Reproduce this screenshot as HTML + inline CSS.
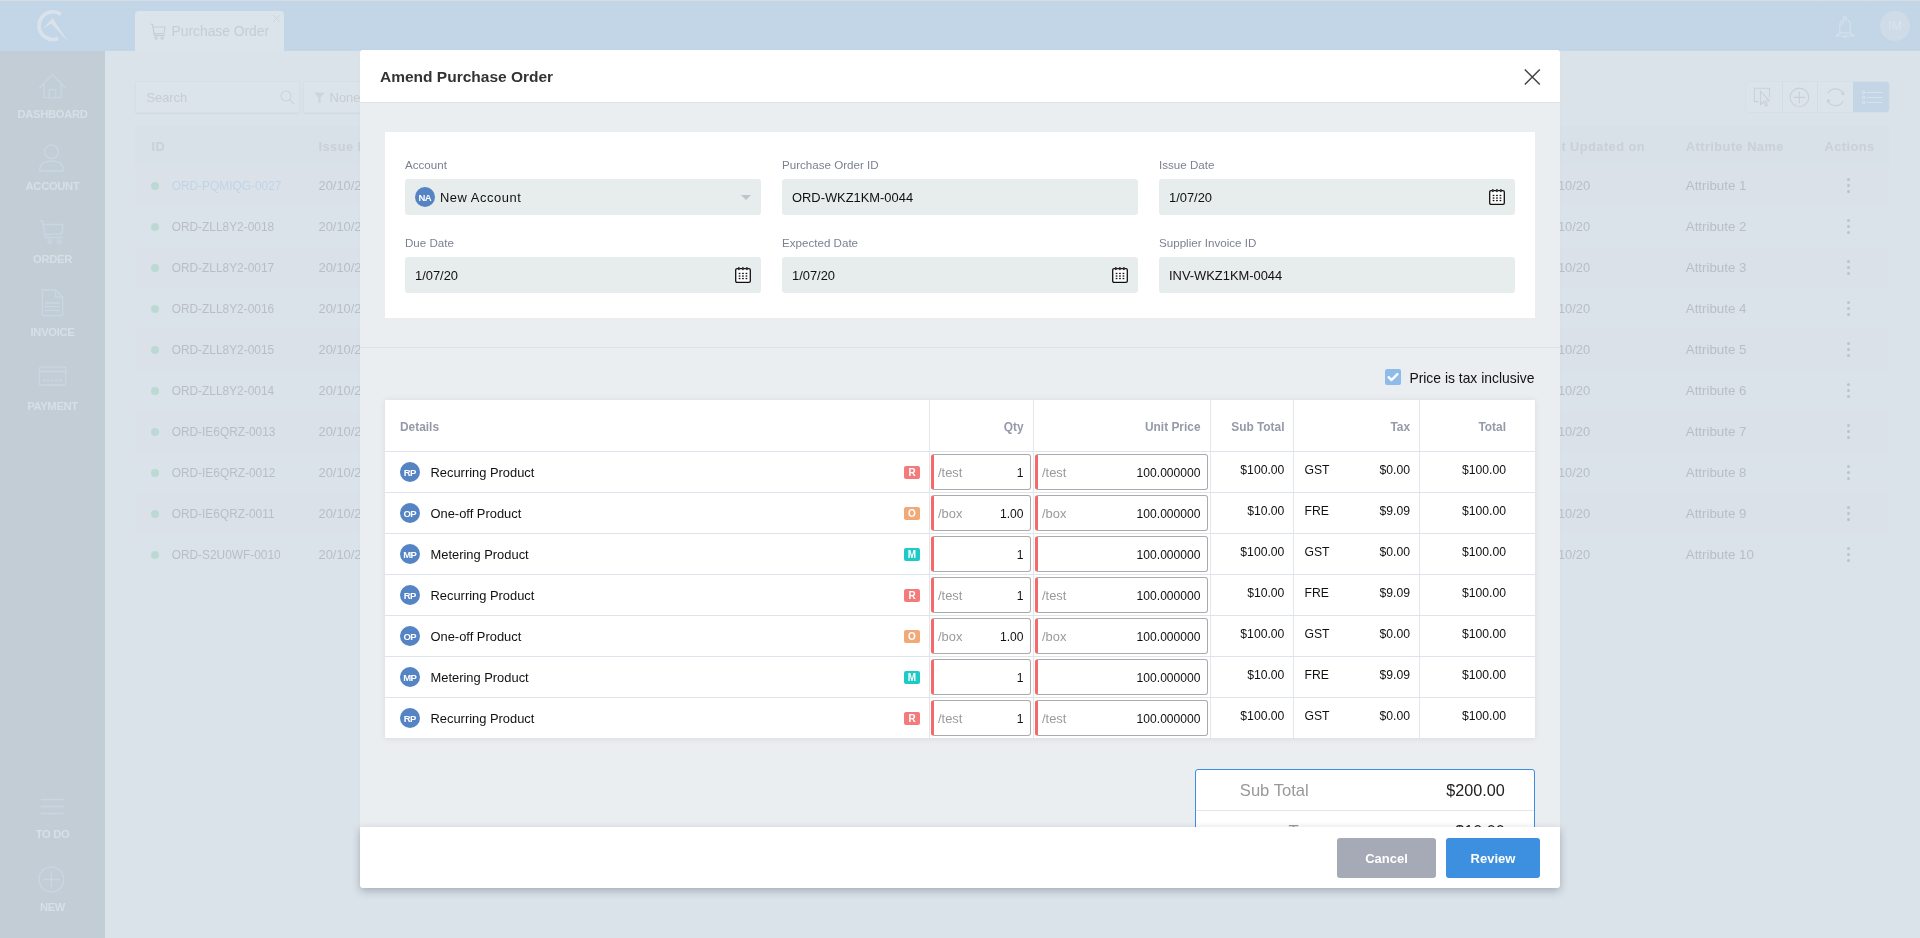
<!DOCTYPE html>
<html><head><meta charset="utf-8">
<style>
*{box-sizing:border-box;margin:0;padding:0}
html,body{width:1920px;height:938px;overflow:hidden}
body{position:relative;background:#dbe3ea;font-family:"Liberation Sans",sans-serif;color:#111}
#root{position:absolute;left:0;top:0;width:1920px;height:938px;will-change:transform;overflow:hidden}
.abs{position:absolute}
/* background app */
#topline{left:0;top:0;width:1920px;height:1px;background:#d6dde4}
#topbar{left:0;top:1px;width:1920px;height:50px;background:#c3d6e8}
#sidebar{left:0;top:51px;width:105px;height:887px;background:#c3cdd6}
.nav{position:absolute;left:0;width:105px;text-align:center;font-weight:bold;font-size:11.2px;line-height:11.2px;color:#d7dfe7;letter-spacing:-0.3px}
#tab{left:135px;top:11px;width:149px;height:40px;background:#dce4eb;border-radius:4px 4px 0 0}
#search{left:135px;top:81px;width:165px;height:32px;box-shadow:0 1px 2px rgba(60,80,100,0.06);border:1px solid #d6dee6;border-radius:3px;background:#dce4eb}
#filter{left:303px;top:81px;width:80px;height:32px;box-shadow:0 1px 2px rgba(60,80,100,0.06);border:1px solid #d6dee6;border-radius:3px;background:#dce4eb}
#toolbar{left:1745px;top:81px;width:145px;height:32px;border:1px solid #d6dee6;border-radius:4px;background:#dce4eb;overflow:hidden}
#bgthead{left:135px;top:126px;width:1754px;height:39px;background:#d8e0e8}
.bgrow{position:absolute;left:135px;width:1754px;height:41px}
.bgtxt{position:absolute;font-size:11.9px;line-height:1;color:#b8bec6;white-space:nowrap}
.bghd{position:absolute;font-size:12.8px;line-height:12.8px;letter-spacing:0.45px;font-weight:bold;color:#c9d0d8;white-space:nowrap}
.dot{position:absolute;width:8px;height:8px;border-radius:50%;background:#bcd9d3}
.kebab{position:absolute;width:4px}
.kebab i{display:block;width:3px;height:3px;border-radius:50%;background:#bcc2ca;margin-bottom:3px}
/* modal */
#modal{left:360px;top:50px;width:1200px;height:838px;background:#ebeef1;border-radius:3px;box-shadow:0 0 1px rgba(80,95,115,0.12)}
#mhead{left:0;top:0;width:1200px;height:53px;background:#fff;border-bottom:1px solid #dfe3e8;border-radius:3px 3px 0 0}
#mtitle{left:20px;top:19px;line-height:15.5px;font-size:15.5px;font-weight:bold;color:#333;white-space:nowrap}
#card{left:25px;top:82px;width:1150px;height:186px;background:#fff}
.lbl{position:absolute;font-size:11.6px;line-height:11.6px;color:#7c8092;white-space:nowrap}
.inp{position:absolute;height:36px;background:#e7ecec;border-radius:3px}
.inptxt{position:absolute;font-size:12.9px;line-height:12.9px;color:#111;white-space:nowrap;top:13px;left:10px}
#sep{left:0;top:297px;width:1200px;height:1px;background:#dde2e7}
#tbl{left:25px;top:350px;width:1150px;height:339px;background:#fff;box-shadow:0 0 6px rgba(60,70,90,0.10)}
.vb{position:absolute;top:0;width:1px;height:339px;background:#e2e6ed}
.hb{position:absolute;left:0;width:1150px;height:1px;background:#dfe4ec}
.th{position:absolute;top:21.9px;font-size:11.9px;line-height:11.9px;font-weight:bold;color:#959aa9;white-space:nowrap}
.pav{top:0}
.pn{position:absolute;left:45.5px;margin-top:15.1px;font-size:12.9px;line-height:12.9px;color:#111;white-space:nowrap}
.bdg{position:absolute;left:519px;width:16px;height:13px;border-radius:2px;color:#fff;font-weight:bold;font-size:10px;line-height:13px;text-align:center}
.ti{position:absolute;height:36px;border:1px solid #ababab;border-left:3px solid #f46969;border-radius:3px;background:#fff}
.ti .u{position:absolute;left:4px;top:12px;font-size:12.9px;line-height:12.9px;color:#9a9a9a}
.ti .v{position:absolute;right:6.5px;top:11.6px;font-size:12.1px;line-height:12.1px;color:#111}
.tv{position:absolute;margin-top:12.2px;font-size:12.2px;line-height:12.2px;color:#111;white-space:nowrap}
#stbox{left:835px;top:719px;width:340px;height:100px;border:1px solid #3d8ee0;border-radius:3px;background:#fff}
.stl{position:absolute;right:225.3px;font-size:16.6px;line-height:16.6px;color:#999;white-space:nowrap}
.stv{position:absolute;margin-top:-1px;right:29.2px;font-size:16.2px;line-height:16.2px;color:#222;white-space:nowrap}
#mfoot{left:0;top:777px;width:1200px;height:61px;background:#fff;border-radius:0 0 3px 3px;box-shadow:0 3px 8px rgba(50,60,80,0.32)}
.av{position:absolute;width:20px;height:20px;border-radius:50%;background:#5484c4;color:#fff;font-size:9.5px;font-weight:bold;text-align:center;line-height:22px;letter-spacing:-0.5px;text-indent:-0.5px}
.btn{position:absolute;top:11px;height:40px;border-radius:3px;color:#fff;font-weight:bold;font-size:13px;text-align:center;line-height:42px}
</style></head>
<body>
<div id="root">
<div id="topline" class="abs"></div>
<div id="topbar" class="abs"></div>
<div id="sidebar" class="abs"></div>
<svg class="abs" style="left:0;top:0" width="105" height="51" viewBox="0 0 105 51">
<path d="M60.9 14.4 A13.8 13.8 0 1 0 57.9 38.5" fill="none" stroke="#dae3ec" stroke-width="3.6"/>
<path d="M43.3 28.6 L52.6 18.2 L68.2 41.8 L51.4 23.4 Z" fill="#dae3ec"/>
</svg>
<svg class="abs" style="left:0;top:51px" width="105" height="887" viewBox="0 51 105 887" fill="none" stroke="#c9d7e5" stroke-width="1.3" stroke-linecap="round" stroke-linejoin="round">
<path d="M39.4 88 L52.4 74.6 L65.4 88"/>
<path d="M43.9 83.5 V96.6 Q43.9 97.6 44.9 97.6 H60.1 Q61.1 97.6 61.1 96.6 V83.5"/>
<path d="M49.2 97.6 V90.2 Q49.2 89.7 49.7 89.7 H55.3 Q55.8 89.7 55.8 90.2 V97.6"/>
<circle cx="51.5" cy="151.8" r="6.9"/>
<path d="M39.6 171 Q39.6 161 51.5 161 Q63.4 161 63.4 171 Z"/>
<path d="M40.6 220.5 L42.6 221 L45.2 237.5 H62.5"/>
<path d="M43.3 224.5 H63 L62 233.6 L44.6 234.6"/>
<circle cx="49.8" cy="241.6" r="1.8"/><circle cx="59.3" cy="241.6" r="1.8"/>
<path d="M42.4 290 H55.5 L62.6 297 V314.6 Q62.6 315.6 61.6 315.6 H43.4 Q42.4 315.6 42.4 314.6 V291 Q42.4 290 43.4 290 Z"/>
<path d="M55.5 290 V297 H62.6"/>
<path d="M45.6 303 H59.2 M45.6 306.7 H59.2 M45.6 310.4 H59.2"/>
<rect x="39.2" y="367.2" width="26.6" height="17.8" rx="1.5"/>
<path d="M39.2 371.5 H65.8"/>
<path d="M43.8 380.4 H45 M47.8 380.4 H49 M51.8 380.4 H53 M55.8 380.4 H57 M59.8 380.4 H61" stroke-width="1.6"/>
<path d="M41.4 799.5 H63 M41.4 806.5 H63 M41.4 813.4 H63" stroke-width="1.5"/>
<circle cx="51.4" cy="879.5" r="12.3"/>
<path d="M51.4 872 V887 M43.9 879.5 H58.9"/>
</svg>
<div class="nav" style="top:108.5px">DASHBOARD</div>
<div class="nav" style="top:180.9px">ACCOUNT</div>
<div class="nav" style="top:254.0px">ORDER</div>
<div class="nav" style="top:326.5px">INVOICE</div>
<div class="nav" style="top:400.5px">PAYMENT</div>
<div class="nav" style="top:828.5px">TO DO</div>
<div class="nav" style="top:902.0px">NEW</div>
<div id="tab" class="abs">
<svg class="abs" style="left:15px;top:12px" width="16" height="17" viewBox="0 0 16 17" fill="none" stroke="#c5ccd4" stroke-width="1.1" stroke-linecap="round" stroke-linejoin="round"><path d="M0.8 1 L2.6 1.6 L4.2 12.4 H14.6"/><path d="M3 4 H15 L14.1 10.2 L4 10.8"/><circle cx="6" cy="15" r="1.2"/><circle cx="12.2" cy="15" r="1.2"/></svg>
<div class="abs" style="left:36.6px;top:13.6px;font-size:13.8px;line-height:13.8px;color:#c5ccd4;white-space:nowrap">Purchase Order</div>
<svg class="abs" style="left:137px;top:3px" width="9" height="9" viewBox="0 0 9 9"><path d="M1 1L8 8M8 1L1 8" stroke="#cfd6de" stroke-width="1"/></svg>
</div>
<div id="search" class="abs">
<div class="abs" style="left:10.4px;top:10.2px;font-size:12.9px;line-height:12.9px;color:#c6ccd3">Search</div>
<svg class="abs" style="left:144px;top:8px" width="15" height="15" viewBox="0 0 15 15" fill="none" stroke="#ccd3da" stroke-width="1.1"><circle cx="6" cy="6" r="5"/><path d="M9.6 9.6L14 14"/></svg>
</div>
<div id="filter" class="abs">
<svg class="abs" style="left:10px;top:10px" width="11" height="12" viewBox="0 0 11 12"><path d="M0.3 0.5H10.7L6.6 5.4V11.5L4.4 10.3V5.4Z" fill="#cdd4db"/></svg>
<div class="abs" style="left:25.6px;top:10.2px;font-size:12.9px;line-height:12.9px;color:#c6ccd3">None</div>
</div>
<div id="toolbar" class="abs">
<div class="abs" style="left:35.5px;top:0;width:1px;height:32px;background:#d4dce4"></div>
<div class="abs" style="left:71.3px;top:0;width:1px;height:32px;background:#d4dce4"></div>
<div class="abs" style="left:106.5px;top:-1px;width:40px;height:33px;background:#c3d5e6"></div>
<svg class="abs" style="left:0;top:-1px" width="145" height="32" viewBox="1745 81 145 32" fill="none" stroke="#c9d0d8" stroke-width="1.1">
<path d="M1768.6 97.5 V88.2 H1753.4 V101.6 H1757.6"/><path d="M1759.4 91.2 L1759.6 104.8 L1762.4 101.8 L1764.6 106 L1766.4 105.2 L1764.4 101 L1768.4 100.8 Z" fill="#dce3ea"/>
<circle cx="1798.4" cy="97.4" r="9.3"/><path d="M1798.4 91.5 V103.3 M1792.5 97.4 H1804.3"/>
<path d="M1842.6 94.6 A8.6 8.6 0 0 0 1826.8 93.6 M1826.6 99.8 A8.6 8.6 0 0 0 1842.4 101"/>
<path d="M1842.8 91.8 L1842.6 94.8 L1839.8 93.6 M1826.4 102.8 L1826.6 99.8 L1829.4 100.8"/>
</svg>
<svg class="abs" style="left:106.5px;top:-2px" width="38" height="32" viewBox="1852 81 38 32" fill="none" stroke="#dbe3ea" stroke-width="1.1">
<circle cx="1862.6" cy="93.5" r="1.2"/><circle cx="1862.6" cy="98.5" r="1.2"/><circle cx="1862.6" cy="103.5" r="1.2"/>
<path d="M1865.6 93.5 H1881.2 M1865.6 98.5 H1881.2 M1865.6 103.5 H1881.2"/>
</svg>
</div>
<div class="abs" style="left:1819px;top:1px;width:1px;height:50px;background:#c2d4e6"></div>
<div class="abs" style="left:1870px;top:1px;width:1px;height:50px;background:#c2d4e6"></div>
<svg class="abs" style="left:1834px;top:14px" width="22" height="24" viewBox="0 0 22 24" fill="none" stroke="#d6e0ea" stroke-width="1.2" stroke-linejoin="round"><circle cx="11" cy="3.5" r="1.5"/><path d="M7 7 Q11 4 15 7 Q16.2 8.5 16.2 11 V19 L20 22 H2 L5.8 19 V11 Q5.8 8.5 7 7Z"/><path d="M5.8 19 H16.2"/><path d="M9 22 Q11 25 13 22"/><path d="M7.8 11 Q8.2 8 10.6 7.6"/></svg>
<div class="abs" style="left:1880px;top:11px;width:30px;height:30px;border-radius:50%;background:#cfdce8;color:#dbe4ec;font-size:12px;line-height:30px;text-align:center">IM</div>
<div id="bgthead" class="abs"></div>
<div class="bghd" style="left:151.6px;top:141.3px">ID</div>
<div class="bghd" style="left:318.5px;top:141.3px">Issue Date</div>
<div class="bghd" style="left:1538px;top:141.3px">Last Updated on</div>
<div class="bghd" style="left:1685.8px;top:141.3px">Attribute Name</div>
<div class="bghd" style="left:1824.5px;top:141.3px">Actions</div>
<div class="bgrow" style="top:165px;background:#dae1e8"></div>
<div class="dot" style="left:151px;top:181.7px"></div>
<div class="bgtxt" style="left:171.7px;top:180.6px;color:#c1d4e7">ORD-PQMIQG-0027</div>
<div class="bgtxt" style="left:318.5px;top:179.8px;font-size:12.9px">20/10/20</div>
<div class="bgtxt" style="left:1540px;top:179.8px;font-size:12.9px">20/10/20</div>
<div class="bgtxt" style="left:1685.8px;top:179.4px;font-size:13.3px">Attribute 1</div>
<div class="kebab" style="left:1846.9px;top:177.9px"><i></i><i></i><i></i></div>
<div class="bgrow" style="top:206px"></div>
<div class="dot" style="left:151px;top:222.7px"></div>
<div class="bgtxt" style="left:171.7px;top:221.6px;color:#b9bec6">ORD-ZLL8Y2-0018</div>
<div class="bgtxt" style="left:318.5px;top:220.8px;font-size:12.9px">20/10/20</div>
<div class="bgtxt" style="left:1540px;top:220.8px;font-size:12.9px">20/10/20</div>
<div class="bgtxt" style="left:1685.8px;top:220.4px;font-size:13.3px">Attribute 2</div>
<div class="kebab" style="left:1846.9px;top:218.9px"><i></i><i></i><i></i></div>
<div class="bgrow" style="top:247px;background:#dae1e8"></div>
<div class="dot" style="left:151px;top:263.7px"></div>
<div class="bgtxt" style="left:171.7px;top:262.6px;color:#b9bec6">ORD-ZLL8Y2-0017</div>
<div class="bgtxt" style="left:318.5px;top:261.8px;font-size:12.9px">20/10/20</div>
<div class="bgtxt" style="left:1540px;top:261.8px;font-size:12.9px">20/10/20</div>
<div class="bgtxt" style="left:1685.8px;top:261.4px;font-size:13.3px">Attribute 3</div>
<div class="kebab" style="left:1846.9px;top:259.9px"><i></i><i></i><i></i></div>
<div class="bgrow" style="top:288px"></div>
<div class="dot" style="left:151px;top:304.7px"></div>
<div class="bgtxt" style="left:171.7px;top:303.6px;color:#b9bec6">ORD-ZLL8Y2-0016</div>
<div class="bgtxt" style="left:318.5px;top:302.8px;font-size:12.9px">20/10/20</div>
<div class="bgtxt" style="left:1540px;top:302.8px;font-size:12.9px">20/10/20</div>
<div class="bgtxt" style="left:1685.8px;top:302.4px;font-size:13.3px">Attribute 4</div>
<div class="kebab" style="left:1846.9px;top:300.9px"><i></i><i></i><i></i></div>
<div class="bgrow" style="top:329px;background:#dae1e8"></div>
<div class="dot" style="left:151px;top:345.7px"></div>
<div class="bgtxt" style="left:171.7px;top:344.6px;color:#b9bec6">ORD-ZLL8Y2-0015</div>
<div class="bgtxt" style="left:318.5px;top:343.8px;font-size:12.9px">20/10/20</div>
<div class="bgtxt" style="left:1540px;top:343.8px;font-size:12.9px">20/10/20</div>
<div class="bgtxt" style="left:1685.8px;top:343.4px;font-size:13.3px">Attribute 5</div>
<div class="kebab" style="left:1846.9px;top:341.9px"><i></i><i></i><i></i></div>
<div class="bgrow" style="top:370px"></div>
<div class="dot" style="left:151px;top:386.7px"></div>
<div class="bgtxt" style="left:171.7px;top:385.6px;color:#b9bec6">ORD-ZLL8Y2-0014</div>
<div class="bgtxt" style="left:318.5px;top:384.8px;font-size:12.9px">20/10/20</div>
<div class="bgtxt" style="left:1540px;top:384.8px;font-size:12.9px">20/10/20</div>
<div class="bgtxt" style="left:1685.8px;top:384.4px;font-size:13.3px">Attribute 6</div>
<div class="kebab" style="left:1846.9px;top:382.9px"><i></i><i></i><i></i></div>
<div class="bgrow" style="top:411px;background:#dae1e8"></div>
<div class="dot" style="left:151px;top:427.7px"></div>
<div class="bgtxt" style="left:171.7px;top:426.6px;color:#b9bec6">ORD-IE6QRZ-0013</div>
<div class="bgtxt" style="left:318.5px;top:425.8px;font-size:12.9px">20/10/20</div>
<div class="bgtxt" style="left:1540px;top:425.8px;font-size:12.9px">20/10/20</div>
<div class="bgtxt" style="left:1685.8px;top:425.4px;font-size:13.3px">Attribute 7</div>
<div class="kebab" style="left:1846.9px;top:423.9px"><i></i><i></i><i></i></div>
<div class="bgrow" style="top:452px"></div>
<div class="dot" style="left:151px;top:468.7px"></div>
<div class="bgtxt" style="left:171.7px;top:467.6px;color:#b9bec6">ORD-IE6QRZ-0012</div>
<div class="bgtxt" style="left:318.5px;top:466.8px;font-size:12.9px">20/10/20</div>
<div class="bgtxt" style="left:1540px;top:466.8px;font-size:12.9px">20/10/20</div>
<div class="bgtxt" style="left:1685.8px;top:466.4px;font-size:13.3px">Attribute 8</div>
<div class="kebab" style="left:1846.9px;top:464.9px"><i></i><i></i><i></i></div>
<div class="bgrow" style="top:493px;background:#dae1e8"></div>
<div class="dot" style="left:151px;top:509.7px"></div>
<div class="bgtxt" style="left:171.7px;top:508.6px;color:#b9bec6">ORD-IE6QRZ-0011</div>
<div class="bgtxt" style="left:318.5px;top:507.8px;font-size:12.9px">20/10/20</div>
<div class="bgtxt" style="left:1540px;top:507.8px;font-size:12.9px">20/10/20</div>
<div class="bgtxt" style="left:1685.8px;top:507.4px;font-size:13.3px">Attribute 9</div>
<div class="kebab" style="left:1846.9px;top:505.9px"><i></i><i></i><i></i></div>
<div class="bgrow" style="top:534px"></div>
<div class="dot" style="left:151px;top:550.7px"></div>
<div class="bgtxt" style="left:171.7px;top:549.6px;color:#b9bec6">ORD-S2U0WF-0010</div>
<div class="bgtxt" style="left:318.5px;top:548.8px;font-size:12.9px">20/10/20</div>
<div class="bgtxt" style="left:1540px;top:548.8px;font-size:12.9px">20/10/20</div>
<div class="bgtxt" style="left:1685.8px;top:548.4px;font-size:13.3px">Attribute 10</div>
<div class="kebab" style="left:1846.9px;top:546.9px"><i></i><i></i><i></i></div>

<div id="modal" class="abs">
  <div id="mhead" class="abs"><div id="mtitle" class="abs">Amend Purchase Order</div></div>
  <div id="card" class="abs">
    <div class="lbl" style="left:20px;top:27px">Account</div>
    <div class="lbl" style="left:397px;top:27px">Purchase Order ID</div>
    <div class="lbl" style="left:774px;top:27px">Issue Date</div>
    <div class="lbl" style="left:20px;top:105px">Due Date</div>
    <div class="lbl" style="left:397px;top:105px">Expected Date</div>
    <div class="lbl" style="left:774px;top:105px">Supplier Invoice ID</div>
    <div class="inp" style="left:20px;top:47px;width:356px">
      <div class="av" style="left:10px;top:8px">NA</div>
      <div class="inptxt" style="left:35px;letter-spacing:0.55px">New Account</div>
      <svg class="abs" style="left:336px;top:16px" width="10" height="5" viewBox="0 0 10 5"><path d="M0 0H10L5 5Z" fill="#bfc3cf"/></svg>
    </div>
    <div class="inp" style="left:397px;top:47px;width:356px"><div class="inptxt">ORD-WKZ1KM-0044</div></div>
    <div class="inp" style="left:774px;top:47px;width:356px"><div class="inptxt">1/07/20</div><svg class="abs" style="right:10px;top:10px" width="16" height="16" viewBox="0 0 16 16"><rect x="0.7" y="1.6" width="14.6" height="13.7" rx="1.3" fill="#fff" stroke="#111" stroke-width="1.3"/><g fill="#333"><rect x="2.8" y="0" width="2" height="3.2" rx="1"/><rect x="6.9" y="0" width="2" height="3.2" rx="1"/><rect x="10.9" y="0" width="2" height="3.2" rx="1"/></g><g fill="#111"><rect x="3.7" y="5.8" width="1.7" height="1.3"/><rect x="7.1" y="5.8" width="1.7" height="1.3"/><rect x="10.6" y="5.8" width="1.7" height="1.3"/><rect x="3.7" y="8.4" width="1.7" height="1.3"/><rect x="7.1" y="8.4" width="1.7" height="1.3"/><rect x="10.6" y="8.4" width="1.7" height="1.3"/><rect x="3.7" y="10.9" width="1.7" height="1.3"/><rect x="7.1" y="10.9" width="1.7" height="1.3"/><rect x="10.6" y="10.9" width="1.7" height="1.3"/></g></svg></div>
    <div class="inp" style="left:20px;top:125px;width:356px"><div class="inptxt">1/07/20</div><svg class="abs" style="right:10px;top:10px" width="16" height="16" viewBox="0 0 16 16"><rect x="0.7" y="1.6" width="14.6" height="13.7" rx="1.3" fill="#fff" stroke="#111" stroke-width="1.3"/><g fill="#333"><rect x="2.8" y="0" width="2" height="3.2" rx="1"/><rect x="6.9" y="0" width="2" height="3.2" rx="1"/><rect x="10.9" y="0" width="2" height="3.2" rx="1"/></g><g fill="#111"><rect x="3.7" y="5.8" width="1.7" height="1.3"/><rect x="7.1" y="5.8" width="1.7" height="1.3"/><rect x="10.6" y="5.8" width="1.7" height="1.3"/><rect x="3.7" y="8.4" width="1.7" height="1.3"/><rect x="7.1" y="8.4" width="1.7" height="1.3"/><rect x="10.6" y="8.4" width="1.7" height="1.3"/><rect x="3.7" y="10.9" width="1.7" height="1.3"/><rect x="7.1" y="10.9" width="1.7" height="1.3"/><rect x="10.6" y="10.9" width="1.7" height="1.3"/></g></svg></div>
    <div class="inp" style="left:397px;top:125px;width:356px"><div class="inptxt">1/07/20</div><svg class="abs" style="right:10px;top:10px" width="16" height="16" viewBox="0 0 16 16"><rect x="0.7" y="1.6" width="14.6" height="13.7" rx="1.3" fill="#fff" stroke="#111" stroke-width="1.3"/><g fill="#333"><rect x="2.8" y="0" width="2" height="3.2" rx="1"/><rect x="6.9" y="0" width="2" height="3.2" rx="1"/><rect x="10.9" y="0" width="2" height="3.2" rx="1"/></g><g fill="#111"><rect x="3.7" y="5.8" width="1.7" height="1.3"/><rect x="7.1" y="5.8" width="1.7" height="1.3"/><rect x="10.6" y="5.8" width="1.7" height="1.3"/><rect x="3.7" y="8.4" width="1.7" height="1.3"/><rect x="7.1" y="8.4" width="1.7" height="1.3"/><rect x="10.6" y="8.4" width="1.7" height="1.3"/><rect x="3.7" y="10.9" width="1.7" height="1.3"/><rect x="7.1" y="10.9" width="1.7" height="1.3"/><rect x="10.6" y="10.9" width="1.7" height="1.3"/></g></svg></div>
    <div class="inp" style="left:774px;top:125px;width:356px"><div class="inptxt">INV-WKZ1KM-0044</div></div>
  </div>
  <div id="sep" class="abs"></div>
  <svg class="abs" style="left:1163px;top:18px" width="18" height="18" viewBox="0 0 18 18"><path d="M1.8 1.5L16.8 16.5M16.8 1.5L1.8 16.5" stroke="#444" stroke-width="1.5" fill="none"/></svg>
  <div class="abs" style="left:1025px;top:319px;width:16px;height:16px;border-radius:2px;background:#8fbbea"><svg class="abs" style="left:0;top:0" width="16" height="16" viewBox="0 0 16 16"><path d="M3.6 8.2L6.6 11L12.4 5.2" stroke="#fff" stroke-width="2.4" fill="none" stroke-linecap="round" stroke-linejoin="round"/></svg></div>
  <div class="abs" style="left:1049.4px;top:321.9px;font-size:13.9px;line-height:13.9px;color:#111;white-space:nowrap">Price is tax inclusive</div>
<div id="tbl" class="abs">
<div class="vb" style="left:544px"></div>
<div class="vb" style="left:648px"></div>
<div class="vb" style="left:825px"></div>
<div class="vb" style="left:908px"></div>
<div class="vb" style="left:1034px"></div>
<div class="hb" style="top:51px"></div>
<div class="th" style="left:15.0px">Details</div>
<div class="th" style="right:511.5px">Qty</div>
<div class="th" style="right:334.5px">Unit Price</div>
<div class="th" style="right:250.5px">Sub Total</div>
<div class="th" style="right:125.0px">Tax</div>
<div class="th" style="right:29.0px">Total</div>
<div class="hb" style="top:92px"></div>
<div class="av pav" style="left:15px;top:62px">RP</div>
<div class="pn" style="top:52px">Recurring Product</div>
<div class="bdg" style="top:66px;background:#f47b7b">R</div>
<div class="ti" style="left:546px;top:54px;width:100px"><span class=u>/test</span><span class="v">1</span></div>
<div class="ti" style="left:650px;top:54px;width:173px"><span class=u>/test</span><span class="v">100.000000</span></div>
<div class="tv" style="right:250.6px;top:52px">$100.00</div>
<div class="tv" style="left:919.5px;top:52px">GST</div>
<div class="tv" style="right:125.0px;top:52px">$0.00</div>
<div class="tv" style="right:29.0px;top:52px">$100.00</div>
<div class="hb" style="top:133px"></div>
<div class="av pav" style="left:15px;top:103px">OP</div>
<div class="pn" style="top:93px">One-off Product</div>
<div class="bdg" style="top:107px;background:#f2a978">O</div>
<div class="ti" style="left:546px;top:95px;width:100px"><span class=u>/box</span><span class="v">1.00</span></div>
<div class="ti" style="left:650px;top:95px;width:173px"><span class=u>/box</span><span class="v">100.000000</span></div>
<div class="tv" style="right:250.6px;top:93px">$10.00</div>
<div class="tv" style="left:919.5px;top:93px">FRE</div>
<div class="tv" style="right:125.0px;top:93px">$9.09</div>
<div class="tv" style="right:29.0px;top:93px">$100.00</div>
<div class="hb" style="top:174px"></div>
<div class="av pav" style="left:15px;top:144px">MP</div>
<div class="pn" style="top:134px">Metering Product</div>
<div class="bdg" style="top:148px;background:#1ccbc5">M</div>
<div class="ti" style="left:546px;top:136px;width:100px"><span class="v">1</span></div>
<div class="ti" style="left:650px;top:136px;width:173px"><span class="v">100.000000</span></div>
<div class="tv" style="right:250.6px;top:134px">$100.00</div>
<div class="tv" style="left:919.5px;top:134px">GST</div>
<div class="tv" style="right:125.0px;top:134px">$0.00</div>
<div class="tv" style="right:29.0px;top:134px">$100.00</div>
<div class="hb" style="top:215px"></div>
<div class="av pav" style="left:15px;top:185px">RP</div>
<div class="pn" style="top:175px">Recurring Product</div>
<div class="bdg" style="top:189px;background:#f47b7b">R</div>
<div class="ti" style="left:546px;top:177px;width:100px"><span class=u>/test</span><span class="v">1</span></div>
<div class="ti" style="left:650px;top:177px;width:173px"><span class=u>/test</span><span class="v">100.000000</span></div>
<div class="tv" style="right:250.6px;top:175px">$10.00</div>
<div class="tv" style="left:919.5px;top:175px">FRE</div>
<div class="tv" style="right:125.0px;top:175px">$9.09</div>
<div class="tv" style="right:29.0px;top:175px">$100.00</div>
<div class="hb" style="top:256px"></div>
<div class="av pav" style="left:15px;top:226px">OP</div>
<div class="pn" style="top:216px">One-off Product</div>
<div class="bdg" style="top:230px;background:#f2a978">O</div>
<div class="ti" style="left:546px;top:218px;width:100px"><span class=u>/box</span><span class="v">1.00</span></div>
<div class="ti" style="left:650px;top:218px;width:173px"><span class=u>/box</span><span class="v">100.000000</span></div>
<div class="tv" style="right:250.6px;top:216px">$100.00</div>
<div class="tv" style="left:919.5px;top:216px">GST</div>
<div class="tv" style="right:125.0px;top:216px">$0.00</div>
<div class="tv" style="right:29.0px;top:216px">$100.00</div>
<div class="hb" style="top:297px"></div>
<div class="av pav" style="left:15px;top:267px">MP</div>
<div class="pn" style="top:257px">Metering Product</div>
<div class="bdg" style="top:271px;background:#1ccbc5">M</div>
<div class="ti" style="left:546px;top:259px;width:100px"><span class="v">1</span></div>
<div class="ti" style="left:650px;top:259px;width:173px"><span class="v">100.000000</span></div>
<div class="tv" style="right:250.6px;top:257px">$10.00</div>
<div class="tv" style="left:919.5px;top:257px">FRE</div>
<div class="tv" style="right:125.0px;top:257px">$9.09</div>
<div class="tv" style="right:29.0px;top:257px">$100.00</div>
<div class="hb" style="top:338px"></div>
<div class="av pav" style="left:15px;top:308px">RP</div>
<div class="pn" style="top:298px">Recurring Product</div>
<div class="bdg" style="top:312px;background:#f47b7b">R</div>
<div class="ti" style="left:546px;top:300px;width:100px"><span class=u>/test</span><span class="v">1</span></div>
<div class="ti" style="left:650px;top:300px;width:173px"><span class=u>/test</span><span class="v">100.000000</span></div>
<div class="tv" style="right:250.6px;top:298px">$100.00</div>
<div class="tv" style="left:919.5px;top:298px">GST</div>
<div class="tv" style="right:125.0px;top:298px">$0.00</div>
<div class="tv" style="right:29.0px;top:298px">$100.00</div>
</div>

  <div id="stbox" class="abs">
    <div class="abs" style="left:0;top:40px;width:338px;height:1px;background:#e3e6ea"></div>
    <div class="stl" style="top:13px">Sub Total</div><div class="stv" style="top:13px">$200.00</div>
    <div class="stl" style="top:54px;right:auto;left:92.4px">Tax</div><div class="stv" style="top:54px">$10.00</div>
  </div>
  <div id="mfoot" class="abs">
    <div class="btn" style="left:977px;width:99px;background:#a6a9b6">Cancel</div>
    <div class="btn" style="left:1086px;width:94px;background:#3d8fe0">Review</div>
  </div>
</div>
</div>
</body></html>
